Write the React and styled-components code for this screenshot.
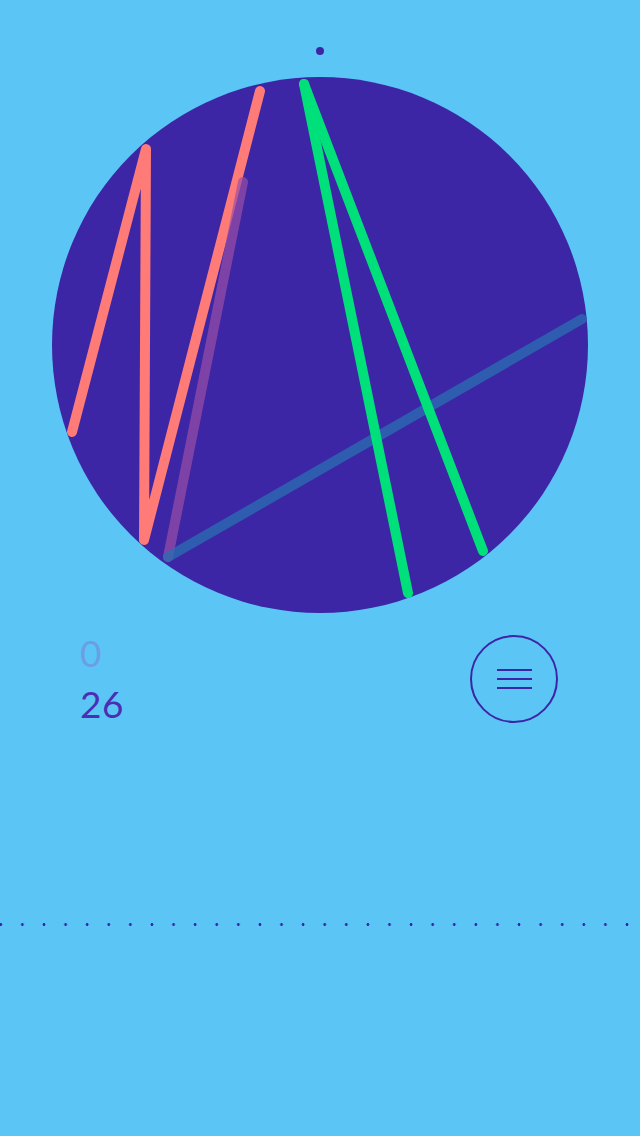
import styled, { createGlobalStyle } from "styled-components";

const GlobalStyle = createGlobalStyle`
  html, body {
    margin: 0;
    padding: 0;
    background: #5bc6f6;
  }
`;

const INK = "#3c26a6";

const Screen = styled.div`
  width: 640px;
  height: 1136px;
  background: #5bc6f6;
  display: flex;
  flex-direction: column;
  align-items: center;
  padding-top: 47px;
  box-sizing: border-box;
  font-family: Lato, "Open Sans", sans-serif;
`;

const Marker = styled.div`
  width: 8px;
  height: 8px;
  border-radius: 50%;
  background: ${INK};
`;

const Board = styled.div`
  margin-top: 22px;
  width: 536px;
  height: 536px;
  border-radius: 50%;
  background: ${INK};
  position: relative;

  svg {
    position: absolute;
    inset: 0;
    overflow: visible;
  }
`;

const InfoRow = styled.div`
  width: 100%;
  box-sizing: border-box;
  display: flex;
  justify-content: space-between;
  align-items: flex-start;
  padding: 22px 82px 0 80px;
`;

const Stats = styled.div`
  display: flex;
  flex-direction: column;
  margin-top: -8px;
`;

const Stat = styled.div`
  font-size: 37px;
  font-weight: 400;
  line-height: 51px;
  color: ${(p) => p.$color};
  letter-spacing: 0.5px;
`;

const MenuButton = styled.button`
  width: 88px;
  height: 88px;
  border-radius: 50%;
  border: 2px solid ${INK};
  background: transparent;
  display: flex;
  flex-direction: column;
  align-items: center;
  justify-content: center;
  gap: 7px;
  padding: 0;
`;

const Bar = styled.span`
  width: 35px;
  height: 2px;
  background: ${INK};
`;

const Dots = styled.div`
  margin-top: 194px;
  width: 100%;
  height: 3px;
  background-image: radial-gradient(circle, ${INK} 1.3px, transparent 1.6px);
  background-size: 21.6px 3px;
  background-position: -10px 0;
`;

const Drawing = () => (
  <svg width="536" height="536" viewBox="52 77 536 536">
    <g fill="none" strokeLinecap="round" strokeLinejoin="round" strokeWidth="10">
      <polyline
        points="72,432 146,149 144,540 260,91"
        stroke="#ff7b78"
      />
      <line x1="243" y1="182" x2="168" y2="557" stroke="#9a4fa6" strokeOpacity="0.7" />
      <line x1="168" y1="557" x2="582" y2="319" stroke="#2a6fb0" strokeOpacity="0.75" />
      <line x1="304" y1="84" x2="408" y2="593" stroke="#00e07a" />
      <line x1="304" y1="84" x2="483" y2="551" stroke="#00e07a" />
    </g>
  </svg>
);

export default function App() {
  return (
    <>
      <GlobalStyle />
      <Screen>
        <Marker />
        <Board>
          <Drawing />
        </Board>
        <InfoRow>
          <Stats>
            <Stat $color="#6a9fe6">0</Stat>
            <Stat $color="#4a2fb4">26</Stat>
          </Stats>
          <MenuButton aria-label="menu">
            <Bar />
            <Bar />
            <Bar />
          </MenuButton>
        </InfoRow>
        <Dots />
      </Screen>
    </>
  );
}
